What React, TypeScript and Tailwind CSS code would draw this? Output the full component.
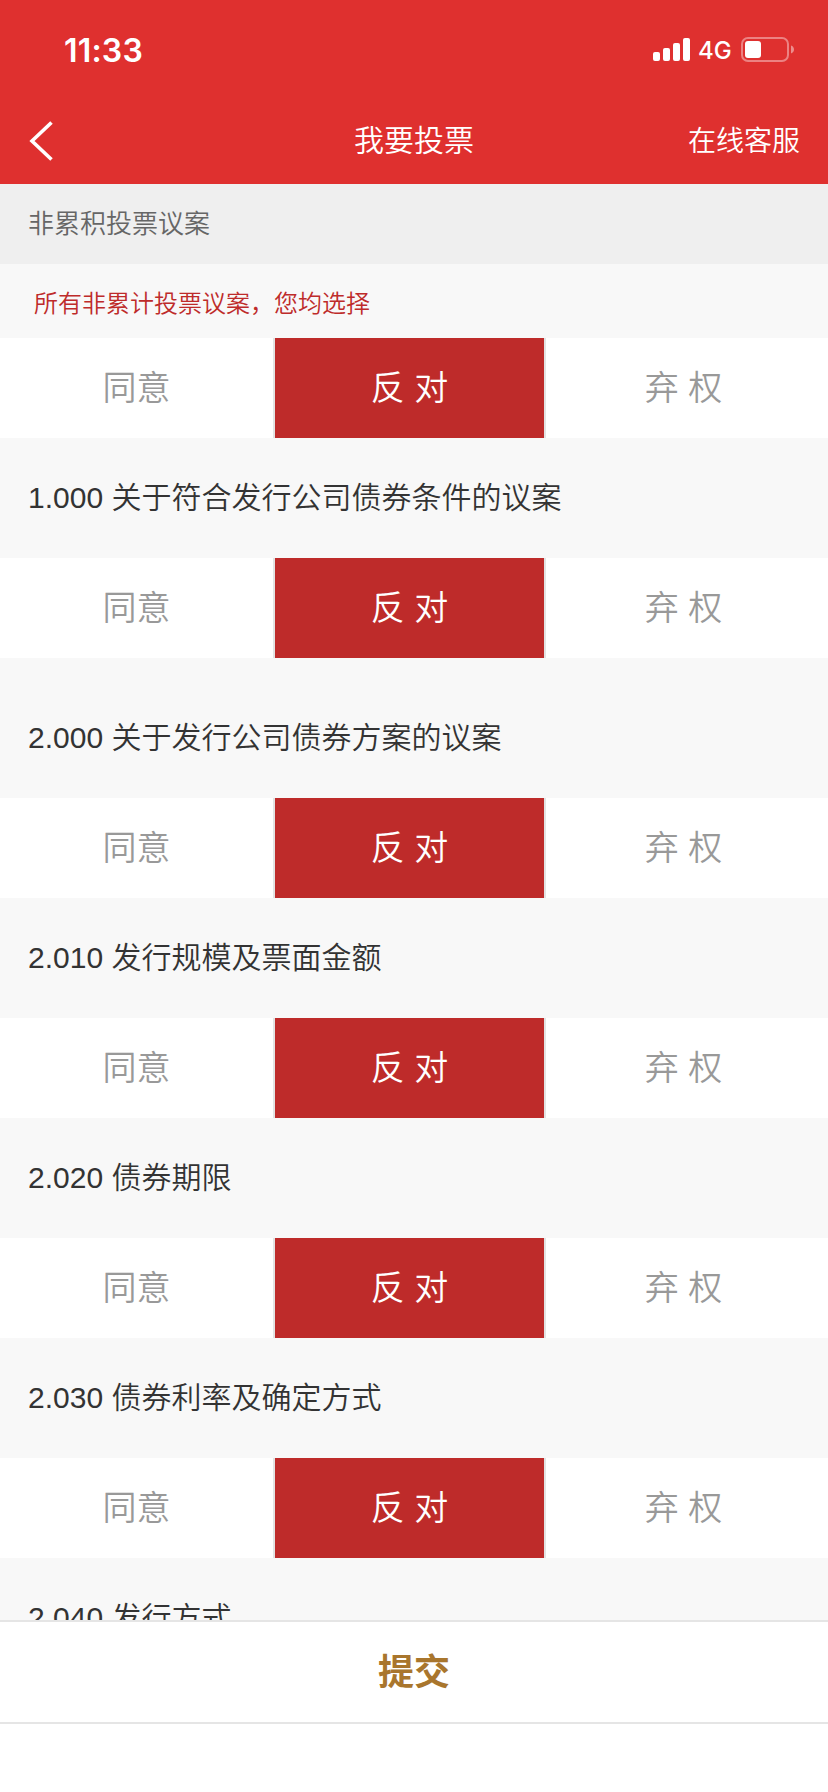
import React, { useState } from 'react';

type Vote = 'agree' | 'against' | 'abstain';

interface Proposal {
  id: string;
  code: string;
  title: string;
  gap?: boolean;
}

const PROPOSALS: Proposal[] = [
  { id: 'p1', code: '1.000', title: '关于符合发行公司债券条件的议案' },
  { id: 'p2', code: '2.000', title: '关于发行公司债券方案的议案', gap: true },
  { id: 'p3', code: '2.010', title: '发行规模及票面金额' },
  { id: 'p4', code: '2.020', title: '债券期限' },
  { id: 'p5', code: '2.030', title: '债券利率及确定方式' },
  { id: 'p6', code: '2.040', title: '发行方式' },
];

const OPTIONS: { value: Vote; label: string; cell: string }[] = [
  { value: 'agree', label: '同意', cell: 'w-[273px]' },
  { value: 'against', label: '反 对', cell: 'w-[269px] border-x-2 border-[#e3e3e3]' },
  { value: 'abstain', label: '弃 权', cell: 'w-[275px]' },
];

const StatusBar: React.FC = () => (
  <div className="flex h-[100px] items-center justify-between pl-[64px] pr-[33px] text-white">
    <span className="pt-px font-[Inter,sans-serif] text-[32px] font-semibold leading-none tracking-[0.2px]">11:33</span>
    <div className="flex items-center">
      <svg width="38" height="24" viewBox="0 0 38 24" fill="currentColor">
        <rect x="0" y="14" width="7" height="9" rx="2" />
        <rect x="10" y="10" width="7" height="13" rx="2" />
        <rect x="20" y="5" width="7" height="18" rx="2" />
        <rect x="30" y="0" width="7" height="23" rx="2" />
      </svg>
      <span className="ml-[7px] w-[43px] pt-0.5 font-[Inter,sans-serif] text-[24px] font-medium leading-none">4G</span>
      <svg width="54" height="26" viewBox="0 0 54 26" fill="none">
        <rect x="1" y="1" width="46" height="23" rx="6" stroke="white" strokeOpacity="0.4" strokeWidth="2" />
        <rect x="4" y="4" width="16" height="17" rx="3" fill="white" />
        <path d="M50 8.5c1.8.6 3 2.200 3 4s-1.200 3.400-3 4z" fill="white" fillOpacity="0.45" />
      </svg>
    </div>
  </div>
);

const VoteRow: React.FC<{ value: Vote; onChange: (v: Vote) => void }> = ({ value, onChange }) => (
  <div className="flex h-[100px] bg-white text-[34px]">
    {OPTIONS.map((option) => (
      <button
        key={option.value}
        onClick={() => onChange(option.value)}
        className={`box-content flex items-center justify-center ${option.cell} ${
          value === option.value ? 'bg-[#be2b2a] text-white' : 'text-[#999999]'
        }`}
      >
        {option.label}
      </button>
    ))}
  </div>
);

const App: React.FC = () => {
  const [allVote, setAllVote] = useState<Vote>('against');
  const [votes, setVotes] = useState<Record<string, Vote>>({});

  const handleAll = (v: Vote) => {
    setAllVote(v);
    setVotes({});
  };

  return (
    <div className="flex h-[1792px] w-[828px] flex-col overflow-hidden bg-white font-['Liberation_Sans','Noto_Sans_CJK_SC',sans-serif] font-[350]">
      <header className="h-[184px] flex-shrink-0 bg-[#df302f] text-white">
        <StatusBar />
        <div className="grid h-[80px] grid-cols-3 items-center px-7 pt-px">
          <button aria-label="返回">
            <svg width="26" height="42" viewBox="0 0 26 42" fill="none" stroke="currentColor" strokeWidth="3.600">
              <path d="M23.500 2.500L4 21L23.500 39.500" />
            </svg>
          </button>
          <h1 className="text-center text-[30px] font-[350]">我要投票</h1>
          <span className="pt-0.5 text-right text-[28px]">在线客服</span>
        </div>
      </header>

      <main className="min-h-0 flex-1 overflow-hidden bg-[#f8f8f8]">
        <div className="flex h-[80px] items-center bg-[#efefef] px-7 text-[26px] text-[#666666]">非累积投票议案</div>
        <div className="flex h-[74px] items-center pl-[34px] pt-1.5 text-[24px] text-[#be2b2a]">
          所有非累计投票议案，您均选择
        </div>
        <VoteRow value={allVote} onChange={handleAll} />
        {PROPOSALS.map((p) => (
          <section key={p.id} className={p.gap ? 'pt-5' : ''}>
            <h2 className="flex h-[120px] items-center whitespace-pre px-7 pb-0.5 text-[30px] font-[350] text-[#333333]">
              {p.code} {p.title}
            </h2>
            <VoteRow value={votes[p.id] ?? allVote} onChange={(v) => setVotes({ ...votes, [p.id]: v })} />
          </section>
        ))}
      </main>

      <footer className="h-[172px] flex-shrink-0 bg-white">
        <button className="flex h-[104px] w-full items-center justify-center border-y-2 border-[#e5e5e5] pt-0.5 text-[36px] font-bold text-[#a9762d]">
          提交
        </button>
      </footer>
    </div>
  );
};

export default App;
